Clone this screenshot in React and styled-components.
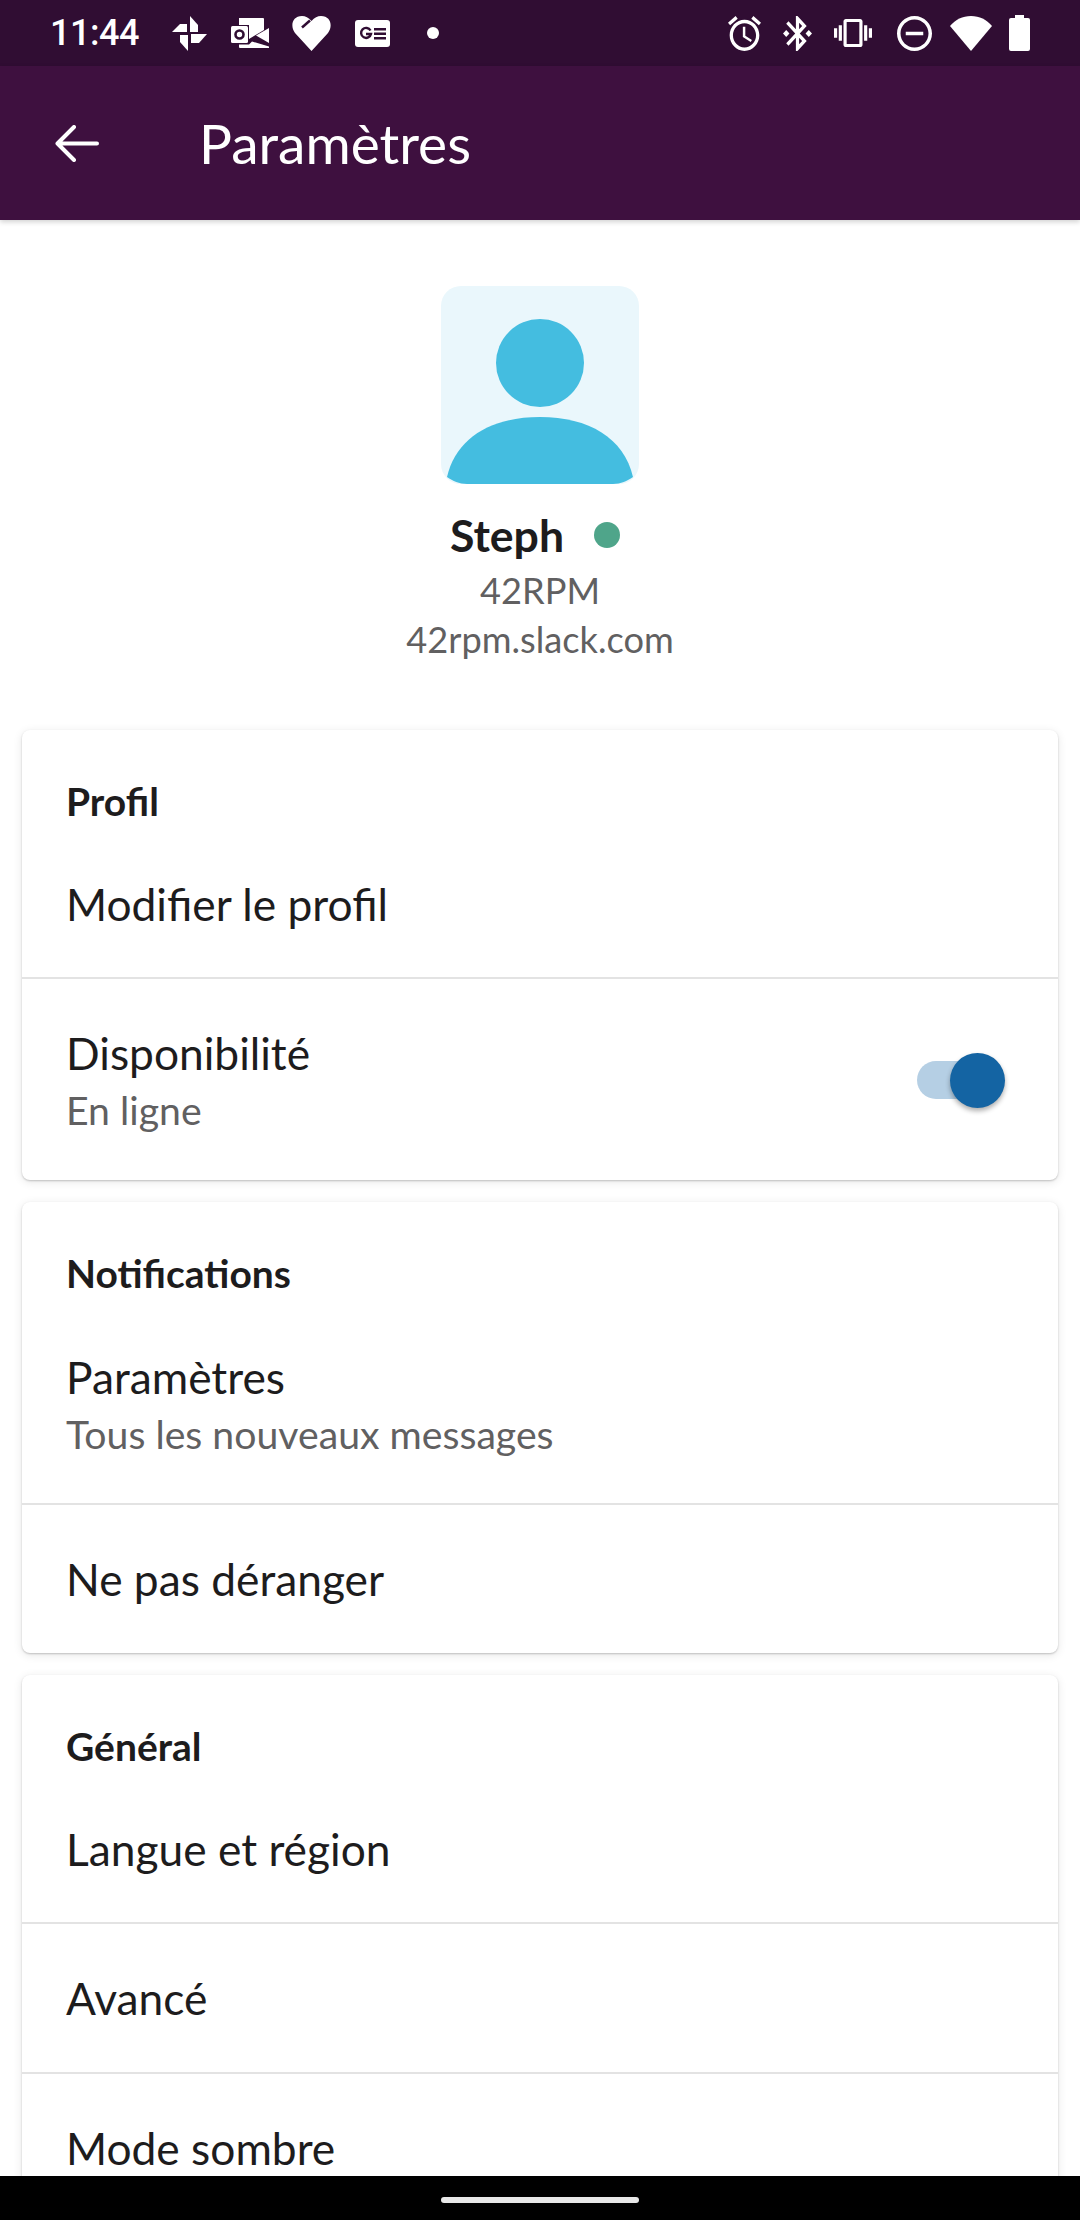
import React from "react";
import styled, { createGlobalStyle } from "styled-components";

const GlobalStyle = createGlobalStyle`
  html, body {
    margin: 0;
    padding: 0;
    background: #fff;
  }
  * {
    box-sizing: border-box;
  }
`;

const Screen = styled.div`
  width: 1080px;
  height: 2220px;
  display: flex;
  flex-direction: column;
  overflow: hidden;
  font-family: "Lato", "Liberation Sans", sans-serif;
  color: #1d1c1d;
`;

const StatusBar = styled.div`
  height: 66px;
  flex: none;
  display: flex;
  align-items: center;
  padding: 0 50px 0 50px;
  background: #300d33;
  color: #fff;
`;

const Clock = styled.span`
  font-family: "Roboto", sans-serif;
  font-weight: 500;
  font-size: 36px;
  line-height: 66px;
  letter-spacing: -0.5px;
  width: 88px;
`;

const Glyph = styled.svg`
  display: block;
  flex: none;
  width: ${(p) => p.$w}px;
  height: ${(p) => p.$h}px;
  margin-left: ${(p) => p.$ml || 0}px;
  fill: #fff;
`;

const Spacer = styled.div`
  flex: 1;
`;

const Toolbar = styled.header`
  height: 154px;
  flex: none;
  display: flex;
  align-items: center;
  padding-left: 55px;
  background: #3e103f;
  box-shadow: 0 2px 5px rgba(0, 0, 0, 0.18);
  position: relative;
  z-index: 1;
`;

const BackArrow = styled.svg`
  width: 44px;
  height: 37px;
  flex: none;
  fill: none;
  stroke: #fff;
  stroke-width: 4;
  stroke-linecap: round;
  stroke-linejoin: round;
`;

const Title = styled.h1`
  margin: 0 0 0 100px;
  font-size: 55px;
  font-weight: 400;
  color: #fff;
`;

const Content = styled.main`
  flex: 1;
  min-height: 0;
  overflow: hidden;
  padding: 0 22px;
`;

const Profile = styled.section`
  display: flex;
  flex-direction: column;
  align-items: center;
  padding-top: 66px;
  margin-bottom: 66px;
`;

const Avatar = styled.svg`
  display: block;
  width: 198px;
  height: 198px;
  border-radius: 20px;
  background: #eaf7fc;
  fill: #44bde0;
`;

const NameRow = styled.div`
  display: flex;
  align-items: center;
  gap: 30px;
  margin: 24px 0 4px;
  padding-right: 10px;
`;

const Name = styled.span`
  font-size: 44.6px;
  line-height: 54px;
  font-weight: 700;
`;

const Presence = styled.span`
  width: 26px;
  height: 26px;
  border-radius: 50%;
  background: #4fa58a;
`;

const ProfileLine = styled.div`
  font-size: 36.2px;
  line-height: 49px;
  color: #616061;
`;

const Card = styled.section`
  background: #fff;
  border-radius: 8px;
  margin-bottom: 22px;
  box-shadow: 0 1px 2px rgba(0, 0, 0, 0.2), 0 2px 10px rgba(0, 0, 0, 0.1);
`;

const CardTitle = styled.h2`
  margin: 0;
  padding: 51px 44px 10px;
  font-size: 39px;
  line-height: 40px;
  font-weight: 700;
`;

const Row = styled.div`
  min-height: ${(p) => p.$height}px;
  display: flex;
  align-items: center;
  justify-content: space-between;
  padding: 0 48px 0 44px;
  border-top: ${(p) => (p.$rule ? "2px solid #e3e3e3" : "none")};
`;

const RowText = styled.div`
  display: flex;
  flex-direction: column;
  padding-top: 1px;
`;

const RowLabel = styled.div`
  font-size: 44.3px;
  line-height: 56px;
`;

const RowSub = styled.div`
  font-size: 39.2px;
  line-height: 50px;
  margin-top: 4px;
  color: #616061;
`;

const Toggle = styled.div`
  position: relative;
  width: 83px;
  height: 38px;
  border-radius: 19px;
  background: #b5cfe4;
  margin-right: 10px;
`;

const Knob = styled.span`
  position: absolute;
  top: -8px;
  right: -5px;
  width: 55px;
  height: 55px;
  border-radius: 50%;
  background: #1464a3;
  box-shadow: 0 3px 5px rgba(0, 0, 0, 0.32);
`;

const NavBar = styled.div`
  height: 44px;
  flex: none;
  display: flex;
  justify-content: center;
  padding-top: 21px;
  background: #000;
  position: relative;
  z-index: 1;
`;

const NavHandle = styled.div`
  width: 198px;
  height: 6px;
  border-radius: 3px;
  background: #e8e8e8;
`;

const Pinwheel = () => (
  <Glyph $w={35} $h={35} $ml={34} viewBox="0 0 35 35">
    <path d="M18 16V0l8 9v7z" />
    <path d="M19 18h16l-8 9h-8z" />
    <path d="M16 19v16l-8-9v-7z" />
    <path d="M15 16H0l8-8h7z" />
  </Glyph>
);

const OutlookMark = () => (
  <Glyph $w={38} $h={30} $ml={24} viewBox="0 0 38 30">
    <path d="M8 0h24a1 1 0 0 1 1 1v11l-15 9V7H8z" />
    <path d="M38 10v15l-13-7.500z" />
    <path d="M8 26.500h10l3-3 17 5v1.500H9a1 1 0 0 1-1-1z" />
    <rect x="0" y="8" width="17" height="17" rx="1.500" />
    <circle cx="8.500" cy="16.500" r="4" fill="none" stroke="#300d33" strokeWidth="2.600" />
  </Glyph>
);

const FitHeart = () => (
  <Glyph $w={39} $h={35} $ml={23} viewBox="0 0 39 35">
    <path d="M19.500 35L3 17C-2 10.500 0 0 10 0c3.500 0 6.500 1.500 9.500 5 3-3.500 6-5 9.500-5 10 0 12 10.500 7 17z" />
    <path d="M10 11.500L18 4.500" fill="none" stroke="#300d33" strokeWidth="2.500" />
  </Glyph>
);

const NewsMark = () => (
  <Glyph $w={35} $h={27} $ml={24} viewBox="0 0 35 27">
    <rect width="35" height="27" rx="3" />
    <path
      d="M15.500 10.500a5 5 0 1 0 .5 3.500h-5"
      fill="none"
      stroke="#300d33"
      strokeWidth="2.400"
    />
    <path d="M19 8h12v2.500H19zM19 12.500h12V15H19zM19 17h12v2.500H19z" fill="#300d33" />
  </Glyph>
);

const Dot = () => (
  <Glyph $w={12} $h={12} $ml={37} viewBox="0 0 12 12">
    <circle cx="6" cy="6" r="6" />
  </Glyph>
);

const AlarmIcon = () => (
  <Glyph $w={33} $h={35} viewBox="2 1.860 20 20.140" preserveAspectRatio="none">
    <path d="M22 5.720l-4.600-3.860-1.290 1.530 4.600 3.860L22 5.720zM7.880 3.390L6.600 1.860 2 5.710l1.290 1.530 4.590-3.850zM12.500 8H11v6l4.750 2.850.75-1.230-4-2.370V8zM12 4c-4.970 0-9 4.030-9 9s4.030 9 9 9 9-4.030 9-9-4.030-9-9-9zm0 16c-3.870 0-7-3.130-7-7s3.130-7 7-7 7 3.130 7 7-3.130 7-7 7z" />
  </Glyph>
);

const BluetoothIcon = () => (
  <Glyph $w={29} $h={35} $ml={22} viewBox="3 2 18 20" preserveAspectRatio="none">
    <path d="M7 12l-2-2-2 2 2 2 2-2zm10.710-4.290L12 2h-1v7.590L6.410 5 5 6.410 10.590 12 5 17.590 6.410 19 11 14.410V22h1l5.710-5.710-4.300-4.290 4.300-4.290zM13 5.830l1.880 1.880L13 9.590V5.830zm1.880 10.460L13 18.170v-3.760l1.880 1.880zM19 10l-2 2 2 2 2-2-2-2z" />
  </Glyph>
);

const VibrateIcon = () => (
  <Glyph $w={38} $h={28} $ml={22} viewBox="0 3 24 18" preserveAspectRatio="none">
    <path d="M0 15h2V9H0v6zm3 2h2V7H3v10zm19-8v6h2V9h-2zm-3 8h2V7h-2v10zM16.500 3h-9C6.670 3 6 3.670 6 4.500v15c0 .83.67 1.500 1.500 1.500h9c.83 0 1.500-.67 1.500-1.500v-15c0-.83-.67-1.500-1.500-1.500zM16 19H8V5h8v14z" />
  </Glyph>
);

const DndIcon = () => (
  <Glyph $w={35} $h={35} $ml={25} viewBox="2 2 20 20">
    <path d="M7 11v2h10v-2H7zm5-9C6.480 2 2 6.480 2 12s4.480 10 10 10 10-4.480 10-10S17.520 2 12 2zm0 18c-4.410 0-8-3.590-8-8s3.590-8 8-8 8 3.590 8 8-3.590 8-8 8z" />
  </Glyph>
);

const WifiIcon = () => (
  <Glyph $w={42} $h={35} $ml={18} viewBox="0 0 42 35">
    <path d="M0 10C5.500 3.500 12.500 0 21 0s15.500 3.500 21 10L21 35z" />
  </Glyph>
);

const BatteryIcon = () => (
  <Glyph $w={21} $h={36} $ml={17} viewBox="0 0 21 36">
    <path d="M6 0h9v3h4a2 2 0 0 1 2 2v29a2 2 0 0 1-2 2H2a2 2 0 0 1-2-2V5a2 2 0 0 1 2-2h4z" />
  </Glyph>
);

const App = () => {
  return (
    <>
      <GlobalStyle />
      <Screen>
        <StatusBar>
          <Clock>11:44</Clock>
          <Pinwheel />
          <OutlookMark />
          <FitHeart />
          <NewsMark />
          <Dot />
          <Spacer />
          <AlarmIcon />
          <BluetoothIcon />
          <VibrateIcon />
          <DndIcon />
          <WifiIcon />
          <BatteryIcon />
        </StatusBar>

        <Toolbar>
          <BackArrow viewBox="0 0 44 37">
            <path d="M2.500 18.500H42M19 2L2.500 18.500 19 35" />
          </BackArrow>
          <Title>Paramètres</Title>
        </Toolbar>

        <Content>
          <Profile>
            <Avatar viewBox="0 0 198 198">
              <circle cx="99" cy="77" r="44" />
              <path d="M6 191C15 152 50 131 99 131s84 21 93 60c-6 4-12 7-20 7H26c-8 0-14-3-20-7z" />
            </Avatar>
            <NameRow>
              <Name>Steph</Name>
              <Presence />
            </NameRow>
            <ProfileLine>42RPM</ProfileLine>
            <ProfileLine>42rpm.slack.com</ProfileLine>
          </Profile>

          <Card>
            <CardTitle>Profil</CardTitle>
            <Row $height={146}>
              <RowLabel>Modifier le profil</RowLabel>
            </Row>
            <Row $height={203} $rule>
              <RowText>
                <RowLabel>Disponibilité</RowLabel>
                <RowSub>En ligne</RowSub>
              </RowText>
              <Toggle>
                <Knob />
              </Toggle>
            </Row>
          </Card>

          <Card>
            <CardTitle>Notifications</CardTitle>
            <Row $height={200}>
              <RowText>
                <RowLabel>Paramètres</RowLabel>
                <RowSub>Tous les nouveaux messages</RowSub>
              </RowText>
            </Row>
            <Row $height={150} $rule>
              <RowLabel>Ne pas déranger</RowLabel>
            </Row>
          </Card>

          <Card>
            <CardTitle>Général</CardTitle>
            <Row $height={146}>
              <RowLabel>Langue et région</RowLabel>
            </Row>
            <Row $height={150} $rule>
              <RowLabel>Avancé</RowLabel>
            </Row>
            <Row $height={150} $rule>
              <RowLabel>Mode sombre</RowLabel>
            </Row>
          </Card>
        </Content>

        <NavBar>
          <NavHandle />
        </NavBar>
      </Screen>
    </>
  );
};

export default App;
